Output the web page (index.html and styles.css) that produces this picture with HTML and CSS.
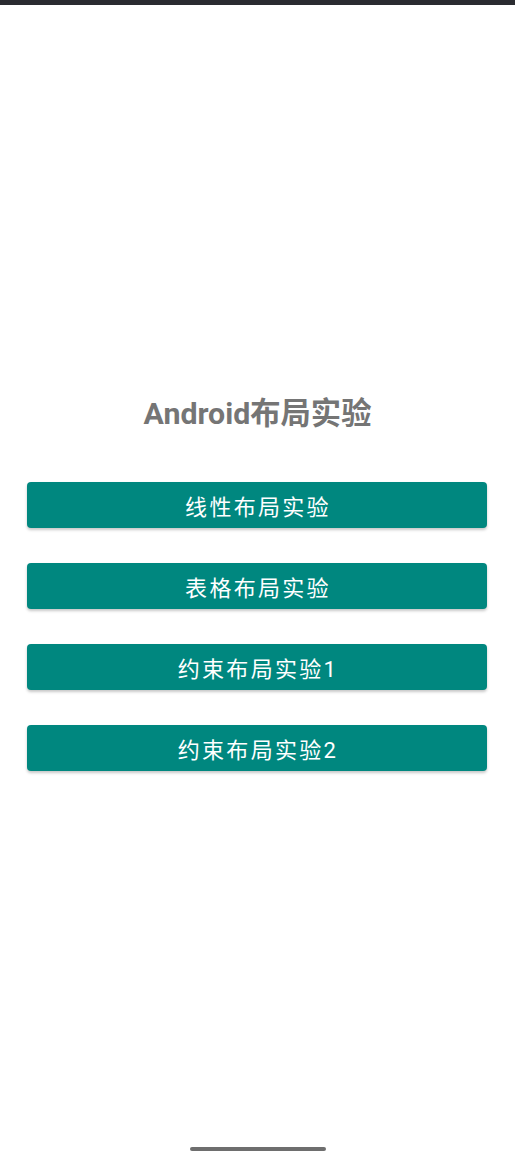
FILE: index.html
```html
<!DOCTYPE html>
<html lang="zh">
<head>
<meta charset="utf-8">
<link rel="stylesheet" href="styles.css">
</head>
<body>
<div class="screen">
  <div class="status"></div>
  <main class="content">
    <h1 class="title">Android布局实验</h1>
    <div class="buttons">
      <button class="btn">线性布局实验</button>
      <button class="btn">表格布局实验</button>
      <button class="btn">约束布局实验1</button>
      <button class="btn">约束布局实验2</button>
    </div>
  </main>
  <div class="nav"><span class="handle"></span></div>
</div>
</body>
</html>
```
FILE: styles.css
```css
html, body {
  margin: 0;
  padding: 0;
  background: #ffffff;
}
.screen {
  width: 515px;
  height: 1163px;
  display: flex;
  flex-direction: column;
  font-family: Roboto, "Noto Sans CJK SC", sans-serif;
}
.status {
  height: 5px;
  background: #2a2b30;
  flex: none;
}
.content {
  flex: 1;
  display: flex;
  flex-direction: column;
  align-items: center;
  padding-top: 391px;
}
.title {
  margin: 0;
  font-size: 30.3px;
  line-height: 36px;
  font-weight: 700;
  color: #757575;
}
.buttons {
  margin-top: 50px;
  margin-right: 1px;
  display: flex;
  flex-direction: column;
  gap: 35px;
  width: 460px;
}
.btn {
  height: 46px;
  border: none;
  border-radius: 4px;
  background: #00877f;
  color: #ffffff;
  font-family: Roboto, "Noto Sans CJK SC", sans-serif;
  font-size: 22px;
  font-weight: 400;
  letter-spacing: 2.3px;
  padding: 0 0 0 2px;
  box-shadow: 0 2px 3px rgba(0,0,0,0.22);
}
.nav {
  flex: none;
  height: 16px;
  display: flex;
  justify-content: center;
}
.handle {
  width: 136px;
  height: 4px;
  border-radius: 2px;
  background: #6e6e6e;
}
```
